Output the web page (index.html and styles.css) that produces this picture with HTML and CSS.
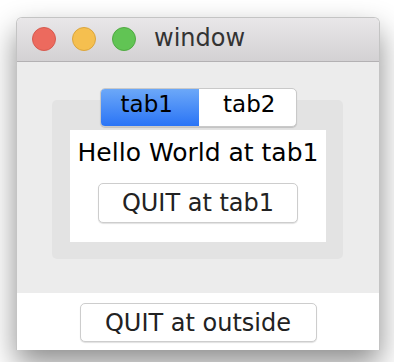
FILE: index.html
```html
<!DOCTYPE html>
<html lang="en">
<head>
    <meta charset="UTF-8">
    <title>window</title>
    <link rel="stylesheet" href="styles.css">
</head>
<body>
    <div class="window">
        <div class="titlebar">
            <div class="lights">
                <span class="light red"></span>
                <span class="light yellow"></span>
                <span class="light green"></span>
            </div>
            <span class="title">window</span>
        </div>

        <div class="main">
            <div class="tab-pane">
                <div class="tabs">
                    <div class="tab active">tab1</div>
                    <div class="tab">tab2</div>
                </div>
                <div class="tab-page">
                    <p class="hello">Hello World at tab1</p>
                    <button class="btn tab-btn">QUIT at tab1</button>
                </div>
            </div>
        </div>

        <div class="footer">
            <button class="btn outside-btn">QUIT at outside</button>
        </div>
    </div>
</body>
</html>
```

FILE: styles.css
```css
body {
    margin: 0;
    padding: 0;
    background-color: #fff;
    font-family: 'DejaVu Sans', 'Liberation Sans', sans-serif;
    color: #000;
    height: 362px;
    overflow: hidden;
}
.window {
    width: 364px;
    margin: 17px 0 0 16px;
    box-sizing: border-box;
    border: 1px solid #c4c4c4;
    border-bottom: none;
    border-radius: 6px 6px 0 0;
    box-shadow: 0 14px 30px rgba(0, 0, 0, 0.45);
    background-color: #fff;
}
.titlebar {
    height: 44px;
    box-sizing: border-box;
    border-bottom: 1px solid #b3b1b3;
    border-radius: 5px 5px 0 0;
    background: linear-gradient(#e9e7e9, #d3d1d3);
    display: flex;
    align-items: center;
    padding: 0 0 2px 15px;
}
.lights {
    display: flex;
    gap: 16px;
}
.light {
    width: 22px;
    height: 22px;
    border-radius: 50%;
    display: block;
}
.light.red {
    background-color: #ec6a5e;
    border: 1px solid #d65a4f;
}
.light.yellow {
    background-color: #f5bf4f;
    border: 1px solid #dba53c;
}
.light.green {
    background-color: #61c454;
    border: 1px solid #50aa42;
}
.title {
    margin-left: 18px;
    font-size: 24px;
    color: #333;
    padding-bottom: 2px;
}
.main {
    background-color: #ececec;
    padding: 38px 36px 34px 35px;
}
.tab-pane {
    background-color: #e3e3e3;
    border-radius: 5px;
    height: 159px;
    box-sizing: border-box;
    padding: 0 17px 17px 18px;
    display: flex;
    flex-direction: column;
    align-items: center;
}
.tabs {
    margin-top: -12px;
    display: flex;
    width: 197px;
    height: 39px;
    box-sizing: border-box;
    background-color: #fff;
    border: 1px solid #c9c9c9;
    border-radius: 5px;
    box-shadow: 0 1px 1px rgba(0, 0, 0, 0.15);
    overflow: hidden;
}
.tab {
    flex: 1 1 0;
    font-size: 23px;
    line-height: 30px;
    text-align: center;
    padding-left: 4px;
}
.tab.active {
    background: linear-gradient(#6ca8f8, #2a74f6);
    padding-left: 0;
    padding-right: 6px;
}
.tab-page {
    margin-top: 3px;
    align-self: stretch;
    flex: 1;
    background-color: #fff;
    display: flex;
    flex-direction: column;
    align-items: center;
    padding-top: 8px;
}
.hello {
    margin: 0;
    font-size: 25px;
    line-height: 30px;
}
.btn {
    font-family: 'DejaVu Sans', 'Liberation Sans', sans-serif;
    background-color: #fff;
    color: #222;
    border: 1px solid #cdcdcd;
    border-radius: 5px;
    box-shadow: 0 1px 1px rgba(0, 0, 0, 0.12);
    font-size: 24px;
    padding: 0;
    cursor: pointer;
}
.tab-btn {
    margin-top: 15px;
    width: 200px;
    height: 40px;
}
.footer {
    height: 57px;
    box-sizing: border-box;
    padding-top: 10px;
    display: flex;
    justify-content: center;
}
.outside-btn {
    width: 237px;
    height: 39px;
    font-size: 24px;
}
```
